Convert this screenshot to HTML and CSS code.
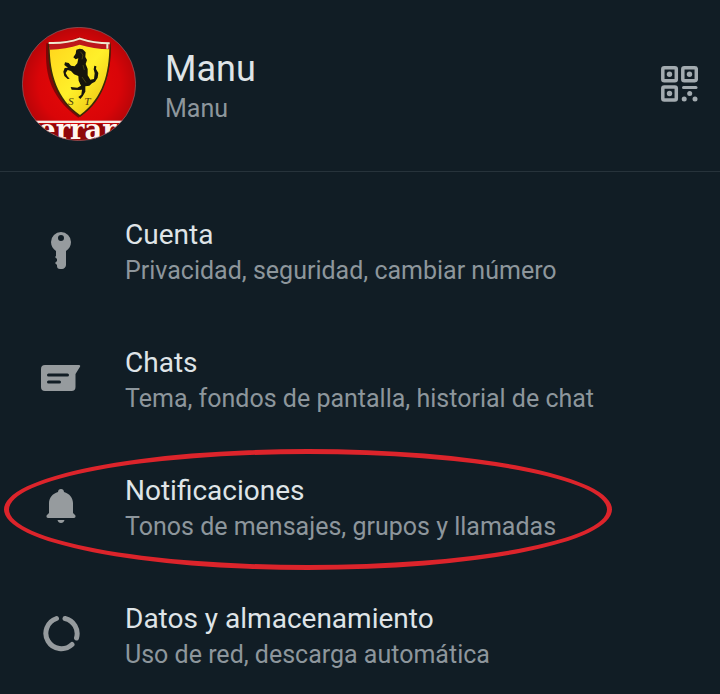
FILE: index.html
```html
<!DOCTYPE html>
<html lang="es">
<head>
    <meta charset="UTF-8">
    <meta name="viewport" content="width=device-width, initial-scale=1.0">
    <title>Ajustes</title>
    <link rel="stylesheet" href="styles.css">
</head>
<body>

    <header class="profile">
        <svg class="avatar" viewBox="35 31 342 342" aria-hidden="true">
            <defs>
                <clipPath id="round"><circle cx="206" cy="202" r="170"/></clipPath>
                <radialGradient id="red" cx="50%" cy="50%" r="55%">
                    <stop offset="0" stop-color="#e80a08"/>
                    <stop offset="0.65" stop-color="#d90508"/>
                    <stop offset="1" stop-color="#ad0508"/>
                </radialGradient>
                <linearGradient id="yellow" x1="0" x2="1" y1="0" y2="1">
                    <stop offset="0" stop-color="#ffd51c"/>
                    <stop offset="0.5" stop-color="#fff02a"/>
                    <stop offset="1" stop-color="#e8b90c"/>
                </linearGradient>
            </defs>
            <g clip-path="url(#round)">
                <rect x="35" y="31" width="342" height="342" fill="url(#red)"/>
                <path d="M108 80 C103 160 112 238 204 303 C276 247 304 175 302 82 Z" fill="#570707" opacity="0.7"/>
                <path d="M114 77 Q168 77 208 62 Q250 77 301 78 C302 165 286 247 209 301 C133 250 111 170 114 77Z" fill="#3a2b08"/>
                <path d="M118 91 Q169 90 208 78 Q250 90 297 92 C296 168 279 245 209 295 C139 246 119 170 118 91Z" fill="url(#yellow)"/>
                <path d="M115 76 Q168 77 208 62 Q250 77 300 78 L299 98 Q248 96 208 84 Q168 97 118 99Z" fill="#bd171b"/>
                <path d="M115 79 Q168 81 208 66 Q250 80 298 80 M291 80 V96" fill="none" stroke="#efe9cf" stroke-width="6"/>
                <path d="M196 111 L198 99 L208 96 L217 98 L226 107 L225 121 L230 130 L226 142 L232 157 L232 176 L240 189 L251 187 L253 170 L250 158 L252 147 L258 149 L257 157 L264 169 L262 183 L254 195 L245 200 L237 207 L225 209 L225 225 L217 239 L210 247 L204 241 L213 234 L215 219 L206 220 L184 219 L181 211 L201 213 L212 207 L205 192 L204 178 L191 173 L182 163 L172 160 L166 169 L171 179 L178 186 L172 187 L162 178 L159 165 L163 154 L173 153 L162 145 L164 137 L175 139 L182 147 L193 149 L201 140 L204 125 L196 128 L189 122Z" fill="#16150c"/>
                <path d="M210 105 L218 115 L215 128 M218 145 L222 160 M215 181 L227 198" fill="none" stroke="#625a13" stroke-width="2"/>
                <text class="crest" x="173" y="264">S</text>
                <text class="crest" x="222" y="264">T</text>
                <rect x="60" y="312" width="292" height="7" fill="#f6e9e3"/>
                <path d="M60 322 H352 V374 H60Z" fill="#8f0709"/>
                <text class="brand" x="84" y="368">errar</text>
            </g>
            <circle cx="206" cy="202" r="170" fill="none" stroke="#85676b" stroke-width="2"/>
        </svg>
        <div class="person">
            <h1 class="name">Manu</h1>
            <p class="detail">Manu</p>
        </div>
        <button class="qr" type="button" aria-label="Código QR">
            <svg class="qr-icon" viewBox="0 0 37 36" aria-hidden="true">
                <g fill="none" stroke="currentColor" stroke-width="3.5">
                    <rect x="1.8" y="1.8" width="13.5" height="13" rx="1.5"/>
                    <rect x="21.8" y="1.8" width="13.5" height="13" rx="1.5"/>
                    <rect x="1.8" y="21" width="13.5" height="13" rx="1.5"/>
                    <path d="M22.5 21.5H35" stroke-linecap="round" stroke-width="3"/>
                </g>
                <g fill="currentColor">
                    <circle cx="8.5" cy="8.3" r="2.7"/>
                    <circle cx="28.5" cy="8.3" r="2.7"/>
                    <circle cx="8.5" cy="27.5" r="2.7"/>
                    <circle cx="28.7" cy="27.5" r="2.5"/>
                    <circle cx="23.2" cy="33" r="2.5"/>
                    <circle cx="34" cy="33" r="2.5"/>
                </g>
            </svg>
        </button>
    </header>

    <nav class="settings">
        <a class="row" href="#cuenta">
            <svg class="icon" viewBox="0 0 40 40" aria-hidden="true">
                <path fill="currentColor" fill-rule="evenodd" d="M20 2a10 10 0 0 0-10 10c0 4 2 7 5 9v5l-1 1 2 2v2l-2 2 2 2v1c0 2 1 3 3 3h2c2 0 4-2 4-4V21c3-2 5-5 5-9A10 10 0 0 0 20 2Zm0 3a3 3 0 1 1 0 6 3 3 0 0 1 0-6Z"/>
            </svg>
            <span class="text">
                <span class="title">Cuenta</span>
                <span class="detail">Privacidad, seguridad, cambiar número</span>
            </span>
        </a>
        <a class="row" href="#chats">
            <svg class="icon" viewBox="0 0 40 40" aria-hidden="true">
                <path fill="currentColor" d="M4 7H38c1.2 0 1.500.9 1 1.800L34.5 16V29a4 4 0 0 1-4 4H4a4 4 0 0 1-4-4V11a4 4 0 0 1 4-4Z"/>
                <path class="cutout" d="M7.5 17H26.5M7.5 24H18.5"/>
            </svg>
            <span class="text">
                <span class="title">Chats</span>
                <span class="detail">Tema, fondos de pantalla, historial de chat</span>
            </span>
        </a>
        <a class="row marked" href="#notificaciones">
            <svg class="icon" viewBox="0 0 40 40" aria-hidden="true">
                <path fill="currentColor" d="M20 3c-1.700 0-3 1-3 3-5.500 1.500-9 6-9 11v10l-2 2c-1 1-.5 3 1 3h26c1.500 0 2-2 1-3l-2-2V17c0-5-3.500-9.500-9-11 0-2-1.300-3-3-3ZM16.500 34h7c-.5 2-1.700 3-3.500 3s-3-1-3.500-3Z"/>
            </svg>
            <span class="text">
                <span class="title">Notificaciones</span>
                <span class="detail">Tonos de mensajes, grupos y llamadas</span>
            </span>
            <span class="ring"></span>
        </a>
        <a class="row" href="#datos">
            <svg class="icon" viewBox="0 0 40 40" aria-hidden="true">
                <path fill="none" stroke="currentColor" stroke-width="5" stroke-linecap="round" d="M15.500 4.500A15.500 15.500 0 1 0 31 30.500M24 4.500A15.500 15.500 0 0 1 35.500 24"/>
            </svg>
            <span class="text">
                <span class="title">Datos y almacenamiento</span>
                <span class="detail">Uso de red, descarga automática</span>
            </span>
        </a>
    </nav>

</body>
</html>
```
FILE: styles.css
```css
* {
    box-sizing: border-box;
}

body {
    margin: 0;
    background-color: #111d25;
    color: #dfe4e7;
    font-family: Roboto, sans-serif;
}

.profile {
    display: flex;
    align-items: center;
    padding: 27px 22px 30px;
    border-bottom: 1px solid #27333b;
}

.avatar {
    flex: none;
    width: 114px;
    height: 114px;
}

.crest {
    font: italic 34px "Liberation Serif", serif;
    fill: #4c420d;
}

.brand {
    font: bold 82px "DejaVu Serif", serif;
    fill: #fff6ef;
}

.person {
    flex: 1;
    padding: 6px 0 0 29px;
}

.name {
    margin: 0;
    font-size: 36px;
    font-weight: 400;
    line-height: 44px;
}

.detail {
    margin: 0;
    color: #8d969c;
    font-size: 25px;
    line-height: 36px;
}

.qr {
    padding: 0;
    border: 0;
    background: none;
    color: #a3abb0;
    cursor: pointer;
}

.qr-icon {
    display: block;
    width: 37px;
    height: 36px;
}

.settings {
    padding-top: 17px;
}

.row {
    display: flex;
    align-items: flex-start;
    padding: 28px 41px;
    color: inherit;
    text-decoration: none;
}

.icon {
    flex: none;
    width: 40px;
    height: 40px;
    margin: 13px 44px 0 0;
    color: #969b9e;
}

.cutout {
    fill: none;
    stroke: #111d25;
    stroke-width: 3;
    stroke-linecap: round;
}

.text {
    display: flex;
    flex-direction: column;
}

.title {
    font-size: 28px;
    line-height: 36px;
}

.marked {
    position: relative;
}

/* red ring drawn around the notifications row */
.ring {
    position: absolute;
    top: 4px;
    left: 4px;
    width: 608px;
    height: 121px;
    border: 5px solid #dc242b;
    border-radius: 50%;
    pointer-events: none;
}
```
